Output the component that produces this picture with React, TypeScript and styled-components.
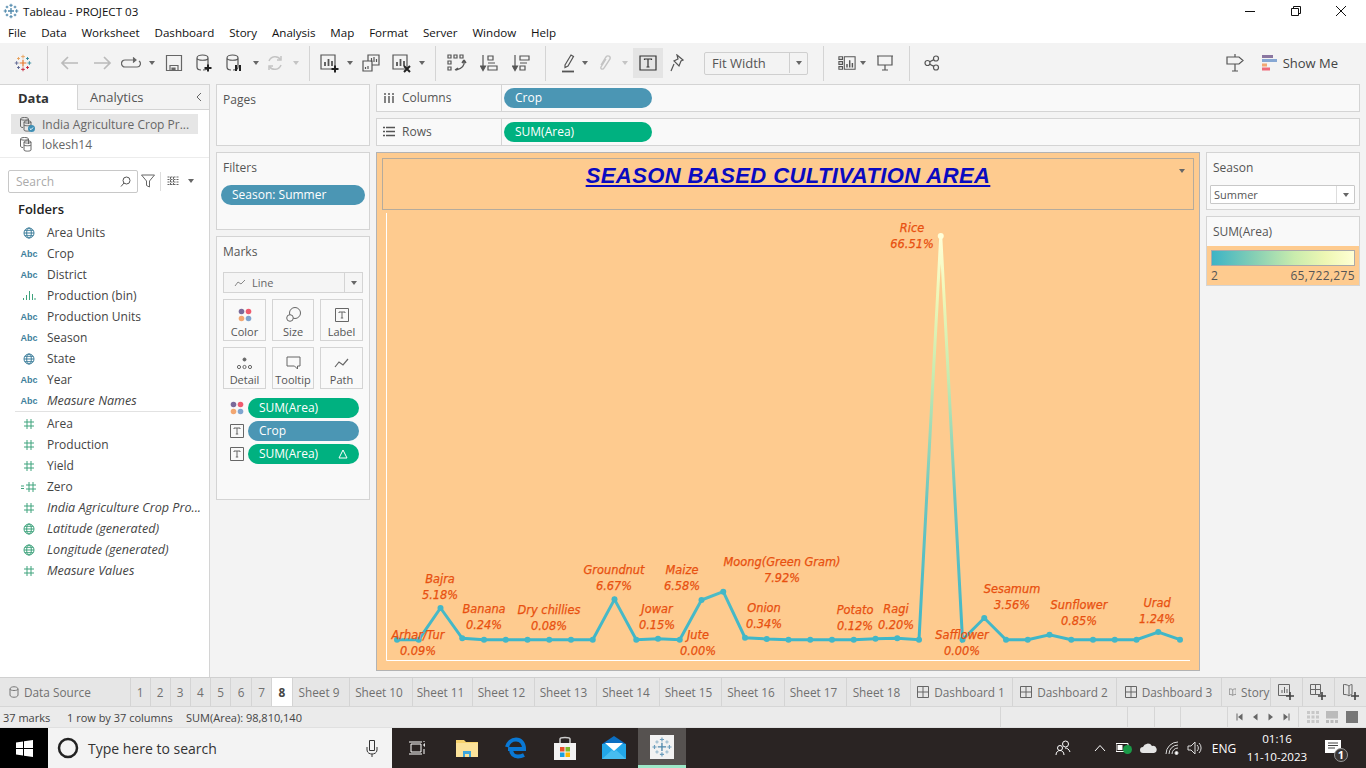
import React from 'react';
import styled, { createGlobalStyle } from 'styled-components';

const palette = {
  border: '#d4d4d4',
  panel: '#f3f3f3',
  card: '#f9f9f9',
  text: '#444',
  muted: '#666',
  icon: '#555',
  blue: '#4b96b4',
  green: '#00b180',
  peach: '#fecb8f',
  dim: '#3f7f9c',
  measure: '#3fa37d',
};

const GlobalStyle = createGlobalStyle`
  html, body {
    margin: 0;
    width: 1366px;
    height: 768px;
    overflow: hidden;
    background: ${palette.panel};
    font-family: "Open Sans", "Liberation Sans", sans-serif;
    font-size: 12px;
    color: ${palette.text};
  }
  * { box-sizing: border-box; }
  svg { display: block; }
`;

const Page = styled.div`
  width: 1366px;
  height: 768px;
  display: flex;
  flex-direction: column;
`;

/* ---------- title + menu ---------- */
const TitleBar = styled.div`
  height: 22px;
  background: #fff;
  display: flex;
  align-items: center;
  padding-left: 3px;
  color: #111;
  font-size: 11.6px;
  gap: 4px;
`;
const WindowButtons = styled.div`
  margin-left: auto;
  display: flex;
  align-items: center;
  gap: 33.5px;
  padding-right: 19px;
`;
const MenuBar = styled.div`
  height: 21px;
  background: #fff;
  display: flex;
  align-items: center;
  padding-left: 8px;
  gap: 14.8px;
  color: #111;
  font-size: 11.6px;
`;

/* ---------- toolbar ---------- */
const ToolBar = styled.div`
  height: 41px;
  background: ${palette.panel};
  display: flex;
  align-items: center;
  padding: 0 0 1px 4px;
`;
const Slot = styled.div<{ $w: number; $ml?: number; $active?: boolean }>`
  width: ${p => p.$w}px;
  height: 30px;
  flex: none;
  display: flex;
  align-items: center;
  justify-content: center;
  margin-left: ${p => p.$ml || 0}px;
  background: ${p => (p.$active ? '#e4e4e4' : 'transparent')};
`;
const Sep = styled.div`
  width: 1px;
  height: 35px;
  flex: none;
  background: #d4d4d4;
`;
const Caret = styled.span<{ $light?: boolean }>`
  display: block;
  width: 0;
  height: 0;
  flex: none;
  border-left: 3.5px solid transparent;
  border-right: 3.5px solid transparent;
  border-top: 4px solid ${p => (p.$light ? '#c4c4c4' : '#666')};
`;
const FitBox = styled.div`
  width: 104px;
  height: 23px;
  margin-left: 13px;
  flex: none;
  border: 1px solid #cfcfcf;
  border-radius: 2px;
  display: flex;
  align-items: center;
  font-size: 13px;
  color: #555;
  padding: 0 0 1px 7px;
`;
const FitArrow = styled.div`
  margin-left: auto;
  width: 18px;
  height: 100%;
  border-left: 1px solid #cfcfcf;
  display: flex;
  align-items: center;
  justify-content: center;
`;
const ShowMe = styled.div`
  margin-left: 12px;
  margin-right: 28px;
  display: flex;
  align-items: center;
  gap: 6px;
  font-size: 13px;
  color: #444;
`;
const ToolRight = styled.div`
  margin-left: auto;
  display: flex;
  align-items: center;
`;

/* ---------- main ---------- */
const Main = styled.div`
  height: 593px;
  display: flex;
`;
const LeftPane = styled.div`
  width: 210px;
  flex: none;
  background: #fff;
  border-right: 1px solid ${palette.border};
  display: flex;
  flex-direction: column;
`;
const PaneTabs = styled.div`
  height: 26px;
  display: flex;
  border-top: 1px solid ${palette.border};
`;
const DataTab = styled.div`
  width: 77px;
  padding-left: 18px;
  display: flex;
  align-items: center;
  font-weight: 700;
  font-size: 13px;
  color: #333;
`;
const AnalyticsTab = styled.div`
  flex: 1;
  padding: 0 6px 0 12px;
  display: flex;
  align-items: center;
  justify-content: space-between;
  font-size: 13px;
  color: #555;
  background: ${palette.panel};
  border-left: 1px solid ${palette.border};
  border-bottom: 1px solid ${palette.border};
`;
const SourceList = styled.div`
  padding: 4px 11px 0;
  height: 48px;
  border-bottom: 1px solid #ececec;
`;
const SourceRow = styled.div<{ $active?: boolean }>`
  height: 20px;
  display: flex;
  align-items: center;
  gap: 7px;
  padding-left: 8px;
  color: #666;
  background: ${p => (p.$active ? '#e6e6e6' : 'transparent')};
  white-space: nowrap;
`;
const SearchRow = styled.div`
  display: flex;
  align-items: center;
  padding: 8px 0 0 8px;
`;
const SearchBox = styled.div`
  width: 130px;
  height: 23px;
  border: 1px solid #c8c8c8;
  border-radius: 2px;
  display: flex;
  align-items: center;
  justify-content: space-between;
  padding: 0 6px 0 7px;
  color: #aaa;
`;
const SearchTools = styled.div`
  display: flex;
  align-items: center;
  margin-left: 3px;
`;
const ToolDivider = styled.div`
  width: 1px;
  height: 19px;
  background: #ddd;
  margin: 0 6px 0 5px;
`;
const FoldersHeading = styled.div`
  margin: 4px 0 0 18px;
  height: 18px;
  line-height: 18px;
  font-size: 13px;
  font-weight: 600;
  color: #222;
`;
const FieldList = styled.div`
  padding: 4px 8px 0 15px;
`;
const FieldRow = styled.div<{ $italic?: boolean }>`
  height: 21px;
  display: flex;
  align-items: center;
  font-style: ${p => (p.$italic ? 'italic' : 'normal')};
  font-size: ${p => (p.$italic ? '12.6px' : '12px')};
  color: #444;
  white-space: nowrap;
`;
const FieldIconCell = styled.div`
  width: 32px;
  flex: none;
  display: flex;
  align-items: center;
  justify-content: center;
  padding-right: 4px;
`;
const AbcTag = styled.span`
  font-family: "Liberation Sans", sans-serif;
  font-size: 9px;
  font-weight: 700;
  font-style: normal;
  color: ${palette.dim};
`;
const FieldDivider = styled.div`
  height: 1px;
  background: #e2e2e2;
  margin: 0 0 1px 0;
`;

const MidColumn = styled.div`
  width: 166px;
  flex: none;
  padding: 0 6px;
  display: flex;
  flex-direction: column;
  gap: 6px;
`;
const Card = styled.div<{ $h: number }>`
  height: ${p => p.$h}px;
  flex: none;
  background: ${palette.card};
  border: 1px solid ${palette.border};
  padding: 0 6px;
`;
const CardTitle = styled.div`
  height: 28px;
  display: flex;
  align-items: center;
  color: #555;
  font-size: 12px;
`;
const Pill = styled.div<{ $color: string }>`
  height: 20px;
  border-radius: 10px;
  background: ${p => p.$color};
  color: #fff;
  display: flex;
  align-items: center;
  justify-content: space-between;
  padding: 0 11px 1px;
  white-space: nowrap;
`;
const FilterPill = styled(Pill)`
  margin: 4px -2px 0 -2px;
`;
const MarkSelect = styled.div`
  height: 21px;
  margin-top: 7px;
  border: 1px solid ${palette.border};
  background: #f5f5f5;
  display: flex;
  align-items: center;
  color: #666;
  font-size: 11px;
  padding-left: 10px;
  gap: 6px;
`;
const MarkSelectArrow = styled.div`
  margin-left: auto;
  width: 18px;
  height: 100%;
  border-left: 1px solid ${palette.border};
  display: flex;
  align-items: center;
  justify-content: center;
`;
const MarkGrid = styled.div`
  margin-top: 6px;
  display: grid;
  grid-template-columns: 43px 42px 43px;
  grid-template-rows: 42px 42px;
  justify-content: space-between;
  row-gap: 6px;
`;
const MarkButton = styled.div`
  border: 1px solid ${palette.border};
  display: flex;
  flex-direction: column;
  align-items: center;
  justify-content: flex-end;
  gap: 2px;
  padding-bottom: 1px;
  font-size: 11px;
  color: #555;
`;
const MarkPills = styled.div`
  margin-top: 9px;
  display: flex;
  flex-direction: column;
  gap: 3px;
  padding-left: 7px;
  padding-right: 4px;
`;
const MarkPillRow = styled.div`
  display: grid;
  grid-template-columns: 18px 1fr;
  align-items: center;
`;

const Workspace = styled.div`
  flex: 1;
  padding-right: 6px;
  display: flex;
  flex-direction: column;
  gap: 6px;
`;
const ShelfCard = styled.div`
  height: 28px;
  flex: none;
  display: flex;
  align-items: center;
  background: ${palette.card};
  border: 1px solid ${palette.border};
`;
const ShelfLabel = styled.div`
  width: 125px;
  height: 100%;
  flex: none;
  border-right: 1px solid ${palette.border};
  display: flex;
  align-items: center;
  padding: 0 0 1px 6px;
  gap: 7px;
  color: #555;
`;
const ShelfPill = styled(Pill)`
  width: 148px;
  margin-left: 2px;
`;
const VizRow = styled.div`
  flex: none;
  height: 519px;
  display: flex;
  gap: 6px;
`;
const Viz = styled.div`
  width: 824px;
  flex: none;
  background: ${palette.peach};
  border: 1px solid #b3b3b3;
  padding: 5px 5px 0;
  display: flex;
  flex-direction: column;
`;
const VizTitleBox = styled.div`
  position: relative;
  height: 52px;
  flex: none;
  border: 1px solid #b5ab9c;
  text-align: center;
  font-family: "Liberation Sans", Arial, sans-serif;
  font-size: 22px;
  letter-spacing: 0.41px;
  font-weight: 700;
  font-style: italic;
  text-decoration: underline;
  color: #0a0ac0;
  line-height: 33px;
`;
const VizMenu = styled.div`
  position: absolute;
  top: 10px;
  right: 8px;
`;
const LegendColumn = styled.div`
  flex: 1;
  display: flex;
  flex-direction: column;
  gap: 6px;
`;
const LegendCard = styled.div<{ $h: number }>`
  height: ${p => p.$h}px;
  background: ${palette.card};
  border: 1px solid ${palette.border};
  display: flex;
  flex-direction: column;
`;
const LegendTitle = styled.div`
  height: 29px;
  flex: none;
  padding-left: 6px;
  display: flex;
  align-items: center;
  color: #555;
`;
const LegendSelect = styled.div`
  height: 19px;
  margin: 3px 4px 0 3px;
  background: #fff;
  border: 1px solid #c8c8c8;
  border-radius: 1px;
  display: flex;
  align-items: center;
  font-size: 11px;
  color: #555;
  padding-left: 3px;
`;
const LegendSelectArrow = styled.div`
  margin-left: auto;
  width: 18px;
  height: 100%;
  border-left: 1px solid #ddd;
  display: flex;
  align-items: center;
  justify-content: center;
`;
const LegendRamp = styled.div`
  flex: 1;
  background: ${palette.peach};
  padding: 4px 4px 0;
`;
const RampBar = styled.div`
  height: 16px;
  border: 1px solid #aaa;
  background: linear-gradient(90deg, #3cb4c6 0%, #86cfb4 30%, #c9ecad 58%, #eef7b4 80%, #ffffd4 100%);
`;
const RampLabels = styled.div`
  display: flex;
  justify-content: space-between;
  color: #555;
  margin-top: 1px;
  line-height: 17px;
  letter-spacing: 0.35px;
`;

/* ---------- tabs + status ---------- */
const TabBar = styled.div`
  height: 30px;
  display: flex;
  background: #e6e6e6;
  border-top: 1px solid #d0d0d0;
  border-bottom: 1px solid #d6d6d6;
  overflow: hidden;
`;
const SheetTab = styled.div<{ $w: number; $active?: boolean; $start?: number }>`
  width: ${p => p.$w}px;
  flex: none;
  display: flex;
  align-items: center;
  justify-content: ${p => (p.$start ? 'flex-start' : 'center')};
  padding-left: ${p => p.$start || 0}px;
  padding-right: ${p => (!p.$start && p.$w > 50 && p.$w < 70 ? 3 : 0)}px;
  gap: 5px;
  border-right: 1px solid #d4d4d4;
  color: ${p => (p.$active ? '#444' : '#707070')};
  font-weight: ${p => (p.$active ? 700 : 400)};
  font-size: 11.8px;
  background: ${p => (p.$active ? '#fff' : 'transparent')};
  white-space: nowrap;
  overflow: hidden;
`;
const StatusBar = styled.div`
  height: 20px;
  background: #ebebeb;
  display: flex;
  align-items: stretch;
  font-size: 11px;
  color: #444;
`;
const StatusText = styled.div<{ $w: number }>`
  width: ${p => p.$w}px;
  flex: none;
  display: flex;
  align-items: center;
`;
const StatusCell = styled.div<{ $w: number }>`
  width: ${p => p.$w}px;
  flex: none;
  border-left: 1px solid #d6d6d6;
  display: flex;
  align-items: center;
  justify-content: space-around;
  padding: 0 4px;
`;
const StatusFill = styled.div`
  flex: none;
  width: 1000px;
  padding-left: 3px;
  display: flex;
`;
const ViewSwatch = styled.div<{ $c: string }>`
  width: 12px;
  height: 12px;
  background: ${p => p.$c};
`;

/* ---------- taskbar ---------- */
const TaskBar = styled.div`
  height: 41px;
  flex: none;
  display: flex;
  align-items: center;
  background: #2a2423;
  color: #fff;
  border-top: 1px solid #e0e0e0;
`;
const StartButton = styled.div`
  width: 48px;
  height: 100%;
  background: #000;
  display: flex;
  align-items: center;
  justify-content: center;
`;
const TaskSearch = styled.div`
  width: 344px;
  height: 100%;
  background: #f3f3f3;
  color: #333;
  font-size: 14px;
  display: flex;
  align-items: center;
  padding: 0 14px 0 9px;
  gap: 9px;
`;
const TaskSlot = styled.div<{ $w: number; $active?: boolean; $mr?: number }>`
  width: ${p => p.$w}px;
  height: 100%;
  flex: none;
  display: flex;
  align-items: center;
  justify-content: center;
  margin-right: ${p => p.$mr || 0}px;
  background: ${p => (p.$active ? '#565250' : 'transparent')};
  border-bottom: ${p => (p.$active ? '3px solid #9de8c8' : 'none')};
`;
const TrayArea = styled.div`
  margin-left: auto;
  display: flex;
  align-items: center;
  height: 100%;
  padding-right: 16px;
`;
const TrayText = styled.div`
  font-size: 12px;
  width: 34px;
  padding-left: 6px;
  text-align: center;
`;
const Clock = styled.div`
  width: 78px;
  text-align: center;
  font-size: 11.6px;
  line-height: 18px;
`;
const Spacer = styled.div`
  flex: 1;
`;
const SearchLabel = styled.span`
  flex: 1;
`;
const ChartSvg = styled.svg`
  flex: none;
`;

/* ---------- icons ---------- */
const cross = (x: number, y: number, r: number) => `M${x - r} ${y}H${x + r}M${x} ${y - r}V${y + r}`;

const TableauMark: React.FC<{ size: number; colors?: string[]; thin?: boolean }> = ({ size, colors, thin }) => {
  const c = colors || ['#4d87ab', '#4d87ab', '#4d87ab', '#4d87ab', '#4d87ab'];
  return (
    <svg width={size} height={size} viewBox="0 0 24 24" fill="none" strokeWidth={thin ? 1.2 : 1.6}>
      <path d={cross(12, 12, 4.5)} stroke={c[0]} strokeWidth={thin ? 1.6 : 2} />
      <path d={cross(12, 3.5, 2.5)} stroke={c[1]} />
      <path d={cross(12, 20.5, 2.5)} stroke={c[2]} />
      <path d={cross(3.5, 12, 2.5)} stroke={c[3]} />
      <path d={cross(20.5, 12, 2.5)} stroke={c[4]} />
      <path d={cross(6, 6, 2)} stroke={c[1]} />
      <path d={cross(18, 6, 2)} stroke={c[4]} />
      <path d={cross(6, 18, 2)} stroke={c[3]} />
      <path d={cross(18, 18, 2)} stroke={c[2]} />
    </svg>
  );
};

const Ico: React.FC<{ w?: number; h?: number; c?: string; sw?: number; children: React.ReactNode }> = ({
  w = 20, h = 20, c = palette.icon, sw = 1.2, children,
}) => (
  <svg width={w} height={h} viewBox={`0 0 ${w} ${h}`} fill="none" stroke={c} strokeWidth={sw}>
    {children}
  </svg>
);

const BarGlyph = ({ x = 0, y = 0 }: { x?: number; y?: number }) => (
  <path d={`M${x + 4} ${y + 11}v-4M${x + 7.5} ${y + 11}v-7M${x + 11} ${y + 11}v-5`} strokeWidth="1.8" />
);
const PlusMark = ({ x, y, c = '#222' }: { x: number; y: number; c?: string }) => (
  <path d={cross(x, y, 3.5)} stroke={c} strokeWidth="2" />
);
const DbGlyph = ({ x = 3 }: { x?: number }) => (
  <path d={`M${x} 5c0-4 11-4 11 0v9c0 2-2 3-5 3M${x} 5c0 3 11 3 11 0M${x} 5v9c0 2 2 3 4 3`} />
);

const toolIcons: Record<string, React.ReactNode> = {
  back: <Ico w={20} h={16} c="#bbb" sw={1.7}><path d="M18 8H2M8 2L2 8l6 6" /></Ico>,
  forward: <Ico w={20} h={16} c="#bbb" sw={1.7}><path d="M2 8h16M12 2l6 6-6 6" /></Ico>,
  loop: <Ico w={20} h={14} c="#666"><path d="M14 4H4a3.3 3.3 0 0 0 0 7h12a3.3 3.3 0 0 0 2-6" /><path d="M12 1.5L15 4l-3 2.5" fill="#666" /></Ico>,
  save: <Ico w={18} h={18} c="#666"><path d="M1.5 1.5h15v15h-15zM5 16.5v-5h8v5" /><path d="M7 14h3v2.5H7z" fill="#666" /></Ico>,
  addDb: <Ico w={18} h={20} c="#555"><DbGlyph x={1} /><PlusMark x={12} y={15} /></Ico>,
  pauseDb: <Ico w={18} h={20} c="#555"><DbGlyph x={1} /><path d="M10 12v6M14 12v6" stroke="#222" strokeWidth="2" /></Ico>,
  refresh: <Ico w={18} h={18} c="#c4c4c4" sw={1.5}><path d="M3 7a6.5 6.5 0 0 1 11.5-1.5M15 11a6.5 6.5 0 0 1-11.5 1.5" /><path d="M15 2v4h-4M3 16v-4h4" /></Ico>,
  newSheet: <Ico w={20} h={20} c="#555"><path d="M1 2h14v14H1z" /><BarGlyph x={1} y={2} /><PlusMark x={15} y={16} /></Ico>,
  dupSheet: <Ico w={18} h={18} c="#555"><path d="M6 1h11v10H6z" /><path d="M1 7h9v10H1z" fill="#f3f3f3" /><path d="M9.5 8V4M12 8V3M14.5 8V5M3.5 15v-2M6 15v-3" /></Ico>,
  clearSheet: <Ico w={20} h={20} c="#555"><path d="M1 2h14v14H1z" /><BarGlyph x={1} y={2} /><path d="M12 13l6 6M18 13l-6 6" stroke="#222" strokeWidth="2" /></Ico>,
  swap: <Ico w={20} h={18} c="#555"><path d="M1 1h3v3H1zM7 1h3v3H7zM13 1h3v3h-3zM1 7h3v3H1zM1 13h3v3H1z" /><path d="M17 7c1 4-2 8-8 9M17 6l-2 3M17 6l2 3M8 16l3-2" strokeWidth="1.4" /></Ico>,
  sortAsc: <Ico w={18} h={18} c="#555"><path d="M3 1v14" /><path d="M0.5 12L3 16.5 5.5 12z" fill="#555" /><path d="M8 2h5v4H8zM8 12h9v4H8zM8 9h7" /></Ico>,
  sortDesc: <Ico w={18} h={18} c="#555"><path d="M3 1v14" /><path d="M0.5 12L3 16.5 5.5 12z" fill="#555" /><path d="M8 2h9v4H8zM8 12h5v4H8zM8 9h7" /></Ico>,
  highlight: <Ico w={14} h={20} c="#555"><path d="M4 12L10 2l2.5 1.5L7 13l-3 1.5z" /><path d="M1 18.5h12" strokeWidth="1.8" /></Ico>,
  clip: <Ico w={14} h={18} c="#c4c4c4" sw={1.4}><path d="M3 11l5-8c1.5-2 5-1 4 2l-6 9c-1 2-4 1-3-1l5-8" /></Ico>,
  textBox: <Ico w={18} h={16} c="#333"><path d="M1 1h16v14H1z" /><path d="M5.5 5V4h7v1M9 4v8M7.5 12h3" /></Ico>,
  pin: <Ico w={14} h={18} c="#555"><path d="M7 1l6 5-2 1-2 5-5-5 4-2zM4 10l-3 7" /></Ico>,
  showHide: <Ico w={20} h={16} c="#555"><path d="M1 1h4v3H1zM1 6.500h4v3H1zM1 12h4v3H1zM7 1h12v14H7z" /><path d="M10 13v-4M13 13V5M16 13V8" strokeWidth="1.6" /></Ico>,
  present: <Ico w={18} h={18} c="#555"><path d="M1 2h16M2 2v9h14V2M9 11v5M6 16h6" /></Ico>,
  share: <Ico w={16} h={16} c="#555"><circle cx="3.500" cy="8" r="2.500" /><circle cx="12" cy="3.500" r="2.500" /><circle cx="12" cy="12.500" r="2.500" /><path d="M5.700 6.800l4.200-2.200M5.700 9.200l4.200 2.200" /></Ico>,
  sign: <Ico w={18} h={18} c="#555"><path d="M9 0v3M1 3h12l4 3.500-4 3.500H1zM9 10v7M6 17h6" /></Ico>,
};

const Slots: React.FC = () => (
  <>
    <Slot $w={38}><TableauMark thin size={18} colors={['#e8762b', '#e8a05b', '#c72037', '#5b6591', '#2f8a9c']} /></Slot>
    <Slot $w={10}><Sep /></Slot>
    <Slot $w={36}>{toolIcons.back}</Slot>
    <Slot $w={28}>{toolIcons.forward}</Slot>
    <Slot $w={30}>{toolIcons.loop}</Slot>
    <Slot $w={12}><Caret /></Slot>
    <Slot $w={32}>{toolIcons.save}</Slot>
    <Slot $w={30}>{toolIcons.addDb}</Slot>
    <Slot $w={30}>{toolIcons.pauseDb}</Slot>
    <Slot $w={12}><Caret /></Slot>
    <Slot $w={26}>{toolIcons.refresh}</Slot>
    <Slot $w={16}><Caret $light /></Slot>
    <Slot $w={10}><Sep /></Slot>
    <Slot $w={32}>{toolIcons.newSheet}</Slot>
    <Slot $w={8}><Caret /></Slot>
    <Slot $w={34}>{toolIcons.dupSheet}</Slot>
    <Slot $w={28}>{toolIcons.clearSheet}</Slot>
    <Slot $w={12}><Caret /></Slot>
    <Slot $w={14}><Sep /></Slot>
    <Slot $w={30}>{toolIcons.swap}</Slot>
    <Slot $w={34}>{toolIcons.sortAsc}</Slot>
    <Slot $w={30}>{toolIcons.sortDesc}</Slot>
    <Slot $w={18}><Sep /></Slot>
    <Slot $w={28}>{toolIcons.highlight}</Slot>
    <Slot $w={6}><Caret /></Slot>
    <Slot $w={34}>{toolIcons.clip}</Slot>
    <Slot $w={6}><Caret $light /></Slot>
    <Slot $w={30} $ml={5} $active>{toolIcons.textBox}</Slot>
    <Slot $w={28}>{toolIcons.pin}</Slot>
    <FitBox>Fit Width<FitArrow><Caret /></FitArrow></FitBox>
    <Slot $w={30}><Sep /></Slot>
    <Slot $w={18}>{toolIcons.showHide}</Slot>
    <Slot $w={14}><Caret /></Slot>
    <Slot $w={30}>{toolIcons.present}</Slot>
    <Slot $w={18}><Sep /></Slot>
    <Slot $w={28}>{toolIcons.share}</Slot>
  </>
);

const Globe = ({ c }: { c: string }) => (
  <Ico w={12} h={12} c={c} sw={1}>
    <circle cx="6" cy="6" r="5" />
    <ellipse cx="6" cy="6" rx="2.300" ry="5" />
    <path d="M1 6h10M1.800 3.300h8.400M1.800 8.700h8.400" />
  </Ico>
);
const Hash = ({ c = palette.measure }: { c?: string }) => (
  <Ico w={12} h={12} c={c} sw={1}>
    <path d="M1 4h10M1 8h10M4 1v10M8 1v10" />
  </Ico>
);
const BinIcon = () => (
  <Ico w={14} h={11} c={palette.measure} sw={1}>
    <path d="M1.500 10V8M4.500 10V5M7.500 10V1M10.500 10V4M13 10V8" />
  </Ico>
);
const CalcHash = () => (
  <Ico w={16} h={12} c={palette.measure} sw={1}>
    <path d="M0 5h3M0 7.500h3M5 4h10M5 8h10M8 1v10M12 1v10" />
  </Ico>
);

const fieldIcon = (kind: string) => {
  switch (kind) {
    case 'globe': return <Globe c={palette.dim} />;
    case 'globeM': return <Globe c={palette.measure} />;
    case 'abc': return <AbcTag>Abc</AbcTag>;
    case 'bin': return <BinIcon />;
    case 'calc': return <CalcHash />;
    default: return <Hash />;
  }
};

const dimensions = [
  { kind: 'globe', name: 'Area Units' },
  { kind: 'abc', name: 'Crop' },
  { kind: 'abc', name: 'District' },
  { kind: 'bin', name: 'Production (bin)' },
  { kind: 'abc', name: 'Production Units' },
  { kind: 'abc', name: 'Season' },
  { kind: 'globe', name: 'State' },
  { kind: 'abc', name: 'Year' },
  { kind: 'abc', name: 'Measure Names', italic: true },
];
const measures = [
  { kind: 'hash', name: 'Area' },
  { kind: 'hash', name: 'Production' },
  { kind: 'hash', name: 'Yield' },
  { kind: 'calc', name: 'Zero' },
  { kind: 'hash', name: 'India Agriculture Crop Pro...', italic: true },
  { kind: 'globeM', name: 'Latitude (generated)', italic: true },
  { kind: 'globeM', name: 'Longitude (generated)', italic: true },
  { kind: 'hash', name: 'Measure Values', italic: true },
];

const SourceIcon = ({ check }: { check?: boolean }) => (
  <svg width="16" height="16" viewBox="0 0 16 16" fill="none" stroke="#666" strokeWidth="1">
    <path d="M1.500 3c0-2 8-2 8 0v5M1.500 3c0 1.500 8 1.500 8 0M1.500 3v7c0 1 1 1.500 2.500 1.500" />
    <path d="M5 6c0-1.500 7-1.500 7 0v8c0 1.500-7 1.500-7 0zM5 6c0 1.500 7 1.500 7 0M5 9c0 1 7 1 7 0" />
    {check && <circle cx="12.500" cy="12.500" r="3.500" fill="#3f8fb5" stroke="none" />}
    {check && <path d="M10.800 12.500l1.200 1.200 2-2.200" stroke="#fff" />}
  </svg>
);
const ColorDots = () => (
  <svg width="14" height="14" viewBox="0 0 14 14">
    <circle cx="3.500" cy="3.500" r="2.800" fill="#7b6a9a" />
    <circle cx="10.500" cy="3.500" r="2.800" fill="#ef5b6e" />
    <circle cx="3.500" cy="10.500" r="2.800" fill="#f2a772" />
    <circle cx="10.500" cy="10.500" r="2.800" fill="#7fa4cf" />
  </svg>
);
const TextGlyph = () => (
  <Ico w={14} h={14} c="#666" sw={1}>
    <path d="M.5.500h13v13H.500z" />
    <path d="M4 5V4h6v1M7 4v6M5.800 10h2.400" />
  </Ico>
);

const markButtons: { label: string; icon: React.ReactNode }[] = [
  { label: 'Color', icon: <ColorDots /> },
  { label: 'Size', icon: <Ico w={15} h={15} c="#666" sw={1}><circle cx="9" cy="6" r="5.500" fill="#f9f9f9" /><circle cx="4" cy="11" r="3.300" fill="#f9f9f9" /></Ico> },
  { label: 'Label', icon: <TextGlyph /> },
  { label: 'Detail', icon: <Ico w={15} h={13} c="#666" sw={1}><circle cx="7.500" cy="2.500" r="1.500" fill="#666" /><circle cx="2" cy="10" r="1.600" /><circle cx="7.500" cy="10" r="1.600" /><circle cx="13" cy="10" r="1.600" /></Ico> },
  { label: 'Tooltip', icon: <Ico w={15} h={14} c="#666" sw={1}><path d="M1 1h13v9h-2.500v3l-3-3H1z" /></Ico> },
  { label: 'Path', icon: <Ico w={15} h={13} c="#666" sw={1.200}><path d="M1 10l4-5 4 3 5-6" /></Ico> },
];

/* ---------- chart data ---------- */
const ys: Record<number, number> = {
  3: 608, 4: 638.3, 11: 599.3, 13: 638.7, 15: 600, 16: 591.7, 17: 637.7, 18: 639,
  23: 638.7, 24: 638.3, 26: 236, 28: 618, 31: 634.7, 36: 632,
};
const points = Array.from({ length: 37 }, (_, i) => {
  const n = i + 1;
  return { x: 397 + i * 21.75, y: ys[n] ?? 639.7 };
});
const chartLabels: [string, string, number, number][] = [
  ['Arhar/Tur', '0.09%', 418, 635],
  ['Bajra', '5.18%', 440, 579],
  ['Banana', '0.24%', 484, 609],
  ['Dry chillies', '0.08%', 549, 610],
  ['Groundnut', '6.67%', 614, 570],
  ['Jowar', '0.15%', 657, 609],
  ['Maize', '6.58%', 682, 570],
  ['Jute', '0.00%', 698, 635],
  ['Moong(Green Gram)', '7.92%', 782, 562],
  ['Onion', '0.34%', 764, 608],
  ['Potato', '0.12%', 855, 610],
  ['Ragi', '0.20%', 896, 609],
  ['Rice', '66.51%', 912, 228],
  ['Safflower', '0.00%', 962, 635],
  ['Sesamum', '3.56%', 1012, 589],
  ['Sunflower', '0.85%', 1079, 605],
  ['Urad', '1.24%', 1157, 603],
];

const Chart: React.FC = () => (
  <ChartSvg width="812" height="456" viewBox="382 210 812 456">
    <defs>
      <linearGradient id="lineGrad" gradientUnits="userSpaceOnUse" x1="0" y1="640" x2="0" y2="234">
        <stop offset="0" stopColor="#3fb6c8" />
        <stop offset="0.35" stopColor="#6cc6c0" />
        <stop offset="0.65" stopColor="#c6ebb0" />
        <stop offset="0.85" stopColor="#eef7b8" />
        <stop offset="1" stopColor="#ffffd9" />
      </linearGradient>
    </defs>
    <path d="M386.500 213V660.500H1190" fill="none" stroke="#fff" strokeWidth="1" />
    <polyline
      points={points.map(p => `${p.x},${p.y}`).join(' ')}
      fill="none"
      stroke="url(#lineGrad)"
      strokeWidth="3"
      strokeLinejoin="miter"
    />
    {points.map(p => (
      <circle key={p.x} cx={p.x} cy={p.y} r="3" fill={p.y < 300 ? '#ffffd9' : '#43b7c7'} />
    ))}
    {chartLabels.map(([name, value, x, y]) => (
      <g
        key={name}
        fontFamily={'"DejaVu Sans", Verdana, sans-serif'}
        fontSize="11.4"
        fontStyle="italic"
        fill="#e8500f"
        stroke="#e8500f"
        strokeWidth="0.25"
        textAnchor="middle"
      >
        <text x={x} y={y + 4}>{name}</text>
        <text x={x} y={y + 19.500}>{value}</text>
      </g>
    ))}
  </ChartSvg>
);

/* ---------- bottom ---------- */
const sheetTabs: { label: string; w: number; active?: boolean }[] = [
  { label: '1', w: 20 }, { label: '2', w: 20 }, { label: '3', w: 20 }, { label: '4', w: 20.500 },
  { label: '5', w: 20 }, { label: '6', w: 21 }, { label: '7', w: 20 }, { label: '8', w: 20.500, active: true },
  { label: 'Sheet 9', w: 57 }, { label: 'Sheet 10', w: 63 }, { label: 'Sheet 11', w: 60 },
  { label: 'Sheet 12', w: 62 }, { label: 'Sheet 13', w: 62 }, { label: 'Sheet 14', w: 63 },
  { label: 'Sheet 15', w: 62 }, { label: 'Sheet 16', w: 63 }, { label: 'Sheet 17', w: 62 },
  { label: 'Sheet 18', w: 64 },
];
const GridGlyph = () => (
  <Ico w={12} h={12} c="#666" sw={1}><path d="M.5.500h11v11H.500zM6 .500v11M.5 6h11" /></Ico>
);
const BookGlyph = () => (
  <Ico w={12} h={12} c="#666" sw={1}><path d="M6 2.500C4.500 1 2.500 1 .500 1v9c2 0 4 0 5.500 1.500 1.500-1.500 3.500-1.500 5.500-1.500V1C9.500 1 7.500 1 6 2.500zV11" /></Ico>
);
const AddTabIcon = ({ children }: { children: React.ReactNode }) => (
  <Ico w={18} h={18} c="#666" sw={1}>
    {children}
    <path d="M13 9v8M9 13h8" stroke="#444" strokeWidth="1.600" />
  </Ico>
);
const NavArrow = ({ dir, bar }: { dir: 1 | -1; bar?: boolean }) => (
  <svg width="8" height="8" viewBox="0 0 8 8" fill="#666">
    <path d={dir > 0 ? 'M1.500 0.500L6 4 1.500 7.500z' : 'M6.500 0.500L2 4l4.500 3.500z'} />
    {bar && <path d={dir > 0 ? 'M6.500 .500h1v7h-1z' : 'M.500 .500h1v7h-1z'} />}
  </svg>
);

const App: React.FC = () => {
  return (
    <Page>
      <GlobalStyle />
      <TitleBar>
        <TableauMark size={16} />
        Tableau - PROJECT 03
        <WindowButtons>
          <Ico w={12} h={12} c="#111" sw={1}><path d="M1 6.500h10" /></Ico>
          <Ico w={12} h={12} c="#111" sw={1}><path d="M1.500 3.500h7v7h-7zM3.500 3.500v-2h7v7h-2" /></Ico>
          <Ico w={12} h={12} c="#111" sw={1}><path d="M1 1l10 10M11 1L1 11" /></Ico>
        </WindowButtons>
      </TitleBar>
      <MenuBar>
        {['File', 'Data', 'Worksheet', 'Dashboard', 'Story', 'Analysis', 'Map', 'Format', 'Server', 'Window', 'Help'].map(m => (
          <span key={m}>{m}</span>
        ))}
      </MenuBar>
      <ToolBar>
        <Slots />
        <ToolRight>
          <Slot $w={30}>{toolIcons.sign}</Slot>
          <ShowMe>
            <svg width="15" height="16" viewBox="0 0 15 16">
              <rect x="0" y="0" width="11" height="3" fill="#8a76a0" />
              <rect x="0" y="4" width="15" height="3" fill="#86a7d3" />
              <rect x="0" y="8.500" width="5" height="3" fill="#f2a772" />
              <rect x="0" y="12.500" width="8" height="3" fill="#ef6b7a" />
            </svg>
            Show Me
          </ShowMe>
        </ToolRight>
      </ToolBar>
      <Main>
        <LeftPane>
          <PaneTabs>
            <DataTab>Data</DataTab>
            <AnalyticsTab>
              Analytics
              <Ico w={8} h={10} c="#666" sw={1}><path d="M6 1L2 5l4 4" /></Ico>
            </AnalyticsTab>
          </PaneTabs>
          <SourceList>
            <SourceRow $active><SourceIcon check />India Agriculture Crop Pr...</SourceRow>
            <SourceRow><SourceIcon />lokesh14</SourceRow>
          </SourceList>
          <SearchRow>
            <SearchBox>
              Search
              <Ico w={11} h={11} c="#555" sw={1}><circle cx="6.500" cy="4.500" r="3.500" /><path d="M4 7l-3 3.500" /></Ico>
            </SearchBox>
            <SearchTools>
              <Ico w={14} h={14} c="#666" sw={1}><path d="M.5 1h13L8.500 7v6l-3-1.500V7z" /></Ico>
              <ToolDivider />
              <Ico w={13} h={10} c="#666" sw={1}><path d="M.5 1h12M.5 3.500h12M.5 6h12M.5 8.500h12M3.500 1v8M6.500 1v8" strokeDasharray="2 1" /></Ico>
              <Spacer />
              <Slot $w={22}><Caret /></Slot>
            </SearchTools>
          </SearchRow>
          <FoldersHeading>Folders</FoldersHeading>
          <FieldList>
            {dimensions.map(f => (
              <FieldRow key={f.name} $italic={f.italic}>
                <FieldIconCell>{fieldIcon(f.kind)}</FieldIconCell>
                {f.name}
              </FieldRow>
            ))}
            <FieldDivider />
            {measures.map(f => (
              <FieldRow key={f.name} $italic={f.italic}>
                <FieldIconCell>{fieldIcon(f.kind)}</FieldIconCell>
                {f.name}
              </FieldRow>
            ))}
          </FieldList>
        </LeftPane>

        <MidColumn>
          <Card $h={62}><CardTitle>Pages</CardTitle></Card>
          <Card $h={78}>
            <CardTitle>Filters</CardTitle>
            <FilterPill $color={palette.blue}>Season: Summer</FilterPill>
          </Card>
          <Card $h={264}>
            <CardTitle>Marks</CardTitle>
            <MarkSelect>
              <Ico w={12} h={10} c="#888" sw={1}><path d="M1 8l3-4 3 2 4-4" /></Ico>
              Line
              <MarkSelectArrow><Caret /></MarkSelectArrow>
            </MarkSelect>
            <MarkGrid>
              {markButtons.map(b => (
                <MarkButton key={b.label}>{b.icon}{b.label}</MarkButton>
              ))}
            </MarkGrid>
            <MarkPills>
              <MarkPillRow><ColorDots /><Pill $color={palette.green}>SUM(Area)</Pill></MarkPillRow>
              <MarkPillRow><TextGlyph /><Pill $color={palette.blue}>Crop</Pill></MarkPillRow>
              <MarkPillRow>
                <TextGlyph />
                <Pill $color={palette.green}>
                  SUM(Area)
                  <Ico w={10} h={10} c="#fff" sw={1}><path d="M5 1l4 8H1z" /></Ico>
                </Pill>
              </MarkPillRow>
            </MarkPills>
          </Card>
        </MidColumn>

        <Workspace>
          <ShelfCard>
            <ShelfLabel>
              <Ico w={12} h={11} c="#666" sw={1.600}><path d="M2 1v10M6 1v10M10 1v10" strokeDasharray="2 1 8" /></Ico>
              Columns
            </ShelfLabel>
            <ShelfPill $color={palette.blue}>Crop</ShelfPill>
          </ShelfCard>
          <ShelfCard>
            <ShelfLabel>
              <Ico w={12} h={11} c="#555" sw={1.500}><path d="M3 1.500h9M3 5.500h9M3 9.500h9M0 1.500h2M0 5.500h2M0 9.500h2" /></Ico>
              Rows
            </ShelfLabel>
            <ShelfPill $color={palette.green}>SUM(Area)</ShelfPill>
          </ShelfCard>
          <VizRow>
            <Viz>
              <VizTitleBox>
                SEASON BASED CULTIVATION AREA
                <VizMenu><Caret /></VizMenu>
              </VizTitleBox>
              <Chart />
            </Viz>
            <LegendColumn>
              <LegendCard $h={58}>
                <LegendTitle>Season</LegendTitle>
                <LegendSelect>
                  Summer
                  <LegendSelectArrow><Caret /></LegendSelectArrow>
                </LegendSelect>
              </LegendCard>
              <LegendCard $h={70}>
                <LegendTitle>SUM(Area)</LegendTitle>
                <LegendRamp>
                  <RampBar />
                  <RampLabels><span>2</span><span>65,722,275</span></RampLabels>
                </LegendRamp>
              </LegendCard>
            </LegendColumn>
          </VizRow>
        </Workspace>
      </Main>

      <TabBar>
        <SheetTab $w={130.500} $start={9}>
          <Ico w={10} h={12} c="#777" sw={1}><path d="M1 3c0-3 8-3 8 0v6c0 3-8 3-8 0zM1 3c0 2 8 2 8 0" /></Ico>
          Data Source
        </SheetTab>
        {sheetTabs.map(t => (
          <SheetTab key={t.label} $w={t.w} $active={t.active}>{t.label}</SheetTab>
        ))}
        <SheetTab $w={102}><GridGlyph />Dashboard 1</SheetTab>
        <SheetTab $w={104}><GridGlyph />Dashboard 2</SheetTab>
        <SheetTab $w={105}><GridGlyph />Dashboard 3</SheetTab>
        <SheetTab $w={49} $start={7}><BookGlyph />Story</SheetTab>
        <SheetTab $w={32}>
          <AddTabIcon><path d="M1.500 1.500h11v11h-11zM5 10V7M7.500 10V4M10 10V6" /></AddTabIcon>
        </SheetTab>
        <SheetTab $w={32}>
          <AddTabIcon><path d="M1.500 1.500h10v10h-10zM6.500 1.500v10M1.500 6.500h10" /></AddTabIcon>
        </SheetTab>
        <SheetTab $w={33}>
          <AddTabIcon><path d="M7 3C5 1.500 3 1.500 1.500 1.500v10c2 0 4 0 5.500 1.500 1-1 2-1.500 3-1.500V1.500C9 1.500 8 2 7 3zV13" /></AddTabIcon>
        </SheetTab>
      </TabBar>
      <StatusBar>
        <StatusFill>
          <StatusText $w={64}>37 marks</StatusText>
          <StatusText $w={119}>1 row by 37 columns</StatusText>
          <StatusText $w={300}>SUM(Area): 98,810,140</StatusText>
        </StatusFill>
        <StatusCell $w={127} />
        <StatusCell $w={27} />
        <StatusCell $w={26} />
        <StatusCell $w={47} />
        <StatusCell $w={71}>
          <NavArrow dir={-1} bar />
          <NavArrow dir={-1} />
          <NavArrow dir={1} />
          <NavArrow dir={1} bar />
        </StatusCell>
        <StatusCell $w={68}>
          <svg width="12" height="12" viewBox="0 0 12 12" fill="#c8c8c8">
            <path d="M0 0h3v3H0zM4.500 0h3v3h-3zM9 0h3v3H9zM0 4.500h3v3H0zM4.500 4.500h3v3h-3zM9 4.500h3v3H9zM0 9h3v3H0zM4.500 9h3v3h-3zM9 9h3v3H9z" />
          </svg>
          <svg width="12" height="12" viewBox="0 0 12 12" fill="#bbb">
            <path d="M0 0h12v7.500H0zM0 9h3v3H0zM4.500 9h3v3h-3zM9 9h3v3H9z" />
          </svg>
          <ViewSwatch $c="#777" />
        </StatusCell>
      </StatusBar>

      <TaskBar>
        <StartButton>
          <svg width="17" height="17" viewBox="0 0 17 17" fill="#fff">
            <path d="M0 2.500L7 1.500V8H0zM8 1.300L17 0V8H8zM0 9h7v6.500l-7-1zM8 9h9v8l-9-1.300z" />
          </svg>
        </StartButton>
        <TaskSearch>
          <svg width="22" height="22" viewBox="0 0 22 22" fill="none">
            <circle cx="11" cy="11" r="9" stroke="#222" strokeWidth="2.500" />
          </svg>
          <SearchLabel>Type here to search</SearchLabel>
          <Ico w={12} h={18} c="#333" sw={1}>
            <path d="M3.500 1.500h5v10h-5zM1 8v3c0 3 3 4 5 4s5-1 5-4V8M6 15v3" />
          </Ico>
        </TaskSearch>
        <TaskSlot $w={50}>
          <Ico w={16} h={16} c="#fff" sw={1}>
            <path d="M2 4h10v8H2zM0 2h13M0 14h13M15 4h1v2h-1zM15 1v1M15 9v5" />
          </Ico>
        </TaskSlot>
        <TaskSlot $w={49}>
          <svg width="22" height="20" viewBox="0 0 22 20">
            <path d="M0 2h8l2 2h12v15H0z" fill="#f6d26d" />
            <path d="M0 5h22v14H0z" fill="#fbe29a" />
            <path d="M7 13h8v6H7z" fill="#3ea7dd" />
            <path d="M9 16h4v3H9z" fill="#fbe29a" />
          </svg>
        </TaskSlot>
        <TaskSlot $w={49}>
          <svg width="22" height="22" viewBox="0 0 22 22" fill="none" stroke="#0a78d4" strokeWidth="4">
            <path d="M3 12h16c0-6-3.500-9.500-8-9.500S3 6 2 10" />
            <path d="M6 12c0 5 3 7.500 7 7.500 2.500 0 4-.5 6-1.500" />
          </svg>
        </TaskSlot>
        <TaskSlot $w={49}>
          <svg width="24" height="24" viewBox="0 0 24 24">
            <path d="M1 7h22v17H1z" fill="#f2f2f2" />
            <path d="M7 7V3c0-2 10-2 10 0v4" fill="none" stroke="#ccc" strokeWidth="1.500" />
            <path d="M7 11h4.500v4.500H7z" fill="#e8502a" />
            <path d="M12.500 11H17v4.500h-4.500z" fill="#7db92a" />
            <path d="M7 16.500h4.500V21H7z" fill="#18a0e0" />
            <path d="M12.500 16.500H17V21h-4.500z" fill="#fcb900" />
          </svg>
        </TaskSlot>
        <TaskSlot $w={49}>
          <svg width="24" height="24" viewBox="0 0 24 24">
            <path d="M0 8L12 0l12 8v15H0z" fill="#0c6fc2" />
            <path d="M0 8h24v15H0z" fill="#22a7e8" />
            <path d="M3 7h18L12 15z" fill="#fff" />
            <path d="M0 23l10-9 2 2 2-2 10 9z" fill="#47bdf0" />
          </svg>
        </TaskSlot>
        <TaskSlot $w={48} $active>
          <svg width="24" height="24" viewBox="0 0 24 24">
            <rect width="24" height="24" fill="#f2f2f2" />
            <g transform="translate(2 2) scale(.83)">
              <path d={cross(12, 12, 5)} stroke="#4d87ab" strokeWidth="1.600" />
              <path d={`${cross(12, 3, 2.500)}${cross(12, 21, 2.500)}${cross(3, 12, 2.500)}${cross(21, 12, 2.500)}`} stroke="#6b9dbc" strokeWidth="1.400" />
              <path d={`${cross(6, 6, 2)}${cross(18, 6, 2)}${cross(6, 18, 2)}${cross(18, 18, 2)}`} stroke="#8fb4cb" strokeWidth="1.200" />
            </g>
          </svg>
        </TaskSlot>
        <TrayArea>
          <TaskSlot $w={22} $mr={14}>
            <Ico w={16} h={16} c="#fff" sw={1}>
              <circle cx="10.500" cy="4" r="3" /><circle cx="5" cy="8" r="2.500" />
              <path d="M1 15c0-3 2-4.500 4-4.500s4 1.500 4 4.500M10 8c2 0 4 1 5 4" />
            </Ico>
          </TaskSlot>
          <TaskSlot $w={24}>
            <Ico w={12} h={8} c="#fff" sw={1}><path d="M1 7l5-5.500L11 7" /></Ico>
          </TaskSlot>
          <TaskSlot $w={24}>
            <svg width="16" height="12" viewBox="0 0 16 12">
              <path d="M0 1.500h12v8H0z" fill="none" stroke="#fff" />
              <path d="M1.500 3h5v5h-5z" fill="#fff" />
              <circle cx="11.500" cy="7.500" r="4.500" fill="#1a9a48" />
            </svg>
          </TaskSlot>
          <TaskSlot $w={24}>
            <svg width="17" height="10" viewBox="0 0 17 10">
              <path d="M3 10a3 3 0 0 1 0-6 5 5 0 0 1 9-1 3.500 3.500 0 0 1 2 7z" fill="#e4e4e4" />
            </svg>
          </TaskSlot>
          <TaskSlot $w={24}>
            <Ico w={15} h={14} c="#ddd" sw={1}>
              <path d="M1 13a12 12 0 0 1 12-12M4 13a9 9 0 0 1 9-9M7 13a6 6 0 0 1 6-6" />
              <circle cx="11.500" cy="12" r="1.500" fill="#fff" />
            </Ico>
          </TaskSlot>
          <TaskSlot $w={20}>
            <Ico w={15} h={14} c="#ddd" sw={1}>
              <path d="M1 5h3l4-4v12l-4-4H1zM10 4a4 4 0 0 1 0 6M12 2a7 7 0 0 1 0 10" />
            </Ico>
          </TaskSlot>
          <TrayText>ENG</TrayText>
          <Clock>01:16<br />11-10-2023</Clock>
          <TaskSlot $w={34}>
            <svg width="30" height="27" viewBox="0 0 30 27">
              <path d="M7 5h16v13H7z" fill="#fff" />
              <path d="M10 8h10M10 10.500h10M10 13h7" stroke="#444" />
              <circle cx="23" cy="20" r="6.500" fill="#3a3634" stroke="#999" />
              <text x="23" y="24" fontSize="11" fontWeight="700" fill="#fff" textAnchor="middle" fontFamily="Open Sans, sans-serif">1</text>
            </svg>
          </TaskSlot>
        </TrayArea>
      </TaskBar>
    </Page>
  );
};

export default App;
